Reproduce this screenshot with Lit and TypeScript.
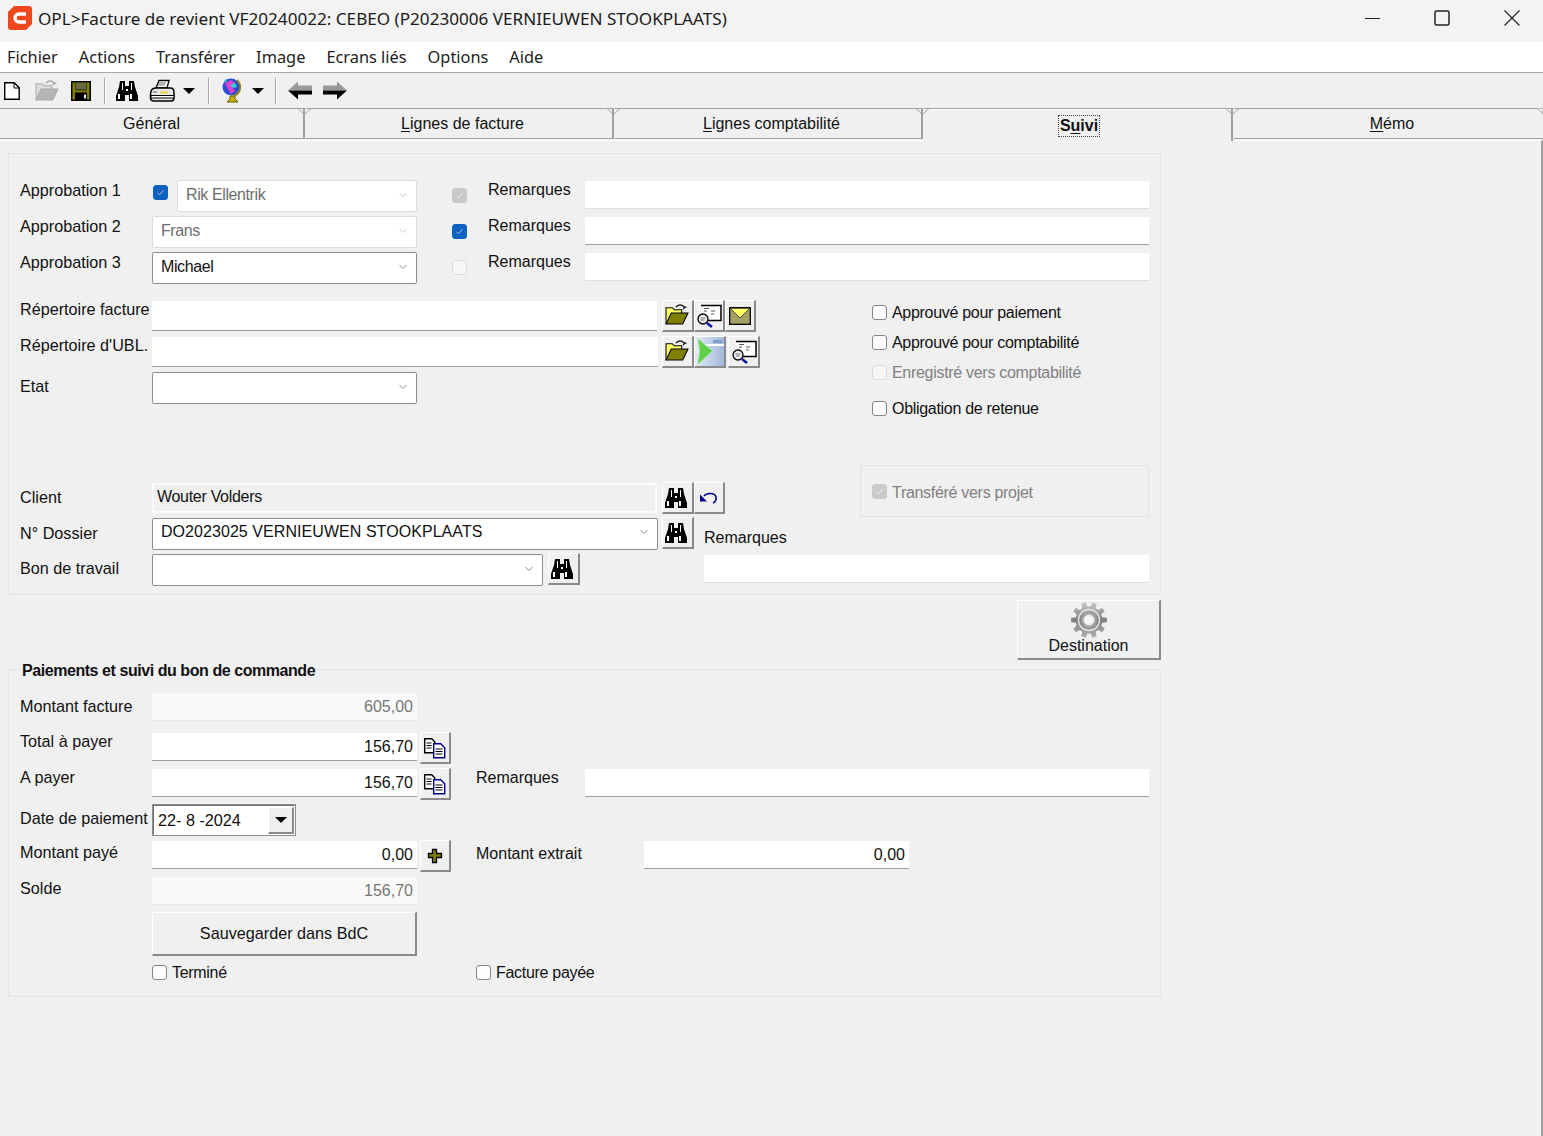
import { LitElement, html, css, svg } from "lit";
import { customElement } from "lit/decorators.js";

const binoc = html`<svg class="bn" width="24" height="22" viewBox="0 0 24 22"><path fill="#000" d="M5 1h5v5h4V1h5l1 6 3 9v5h-9v-6h-4v6H1v-5l3-9z"/><path fill="#fff" d="M7 3h1v7H7zM16 3h1v7h-1zM3 14h2v5H3zM15 14h2v5h-2zM11 9h2v2h-2z"/></svg>`;

const folderOpen = (dim = false) => html`<svg class="fo" width="26" height="23" viewBox="0 0 24 22">
  <path fill="none" stroke=${dim ? "#999" : "#000"} stroke-width="1.200" d="M11 4c2-3 6-3 8 0l-1 2m1-2l2 0"/>
  <path fill=${dim ? "#ddd" : "#ffff66"} stroke=${dim ? "#aaa" : "#000"} d="M1.500 20V4.500h6l2 2h7v3"/>
  <path fill=${dim ? "#b5b5b5" : "#808000"} stroke=${dim ? "#aaa" : "#000"} d="M1.500 20l5-10.500h16l-5 10.500z"/>
</svg>`;

const viewDoc = html`<svg width="26" height="24" viewBox="0 0 26 24">
  <path fill="#fff" stroke="#000" stroke-width="1.500" d="M5 1.500h20v15H12"/>
  <path stroke="#555" d="M8 4.500h5M8 7h3M15 7h4M15 10h3"/>
  <circle cx="7" cy="15" r="5" fill="#eee" stroke="#000" stroke-width="1.300"/>
  <path stroke="#777" d="M4.500 14h5M4.500 16h4"/>
  <path stroke="#1010b0" stroke-width="2.500" d="M11 19l5 4"/>
</svg>`;

const envelope = html`<svg width="22" height="18" viewBox="0 0 22 18">
  <rect x=".7" y=".7" width="20.600" height="16.600" fill="#a6a066" stroke="#000" stroke-width="1.300"/>
  <path fill="#ffff66" d="M2 2h18l-9 9z"/><path fill="none" stroke="#444" d="M1 1l10 10L21 1"/>
</svg>`;

const greenGo = html`<svg width="30" height="29" viewBox="0 0 30 29">
  <defs><linearGradient id="gg" x1="0" x2="1" y1="0" y2="0"><stop offset="0" stop-color="#e4ecf6"/><stop offset="1" stop-color="#9fb6d8"/></linearGradient></defs>
  <rect width="30" height="29" fill="url(#gg)"/>
  <rect x="18" y="3" width="9" height="3" fill="#7f9cc6"/><rect x="10" y="7" width="20" height="2" fill="#fff"/>
  <path fill="#5fcf4a" stroke="#8fe080" d="M3 2l14 12L3 27l2-13z"/>
</svg>`;

const undo = html`<svg width="20" height="14" viewBox="0 0 20 14">
  <path fill="none" stroke="#000090" stroke-width="1.600" d="M5 5c3-3.500 11-3.500 12 1 .6 3-1 5-3 6"/>
  <path fill="#000090" d="M1 3.500v7h7z"/>
</svg>`;

const copyDocs = html`<svg width="24" height="22" viewBox="0 0 24 22">
  <path fill="#fff" stroke="#000" stroke-width="1.400" d="M1.700 1.700h7l3 3v11h-10z"/>
  <path stroke="#000" d="M3.500 6h5M3.500 8.500h5M3.500 11h5"/>
  <path fill="#fff" stroke="#000090" stroke-width="1.400" d="M10.700 6.700h7l4 4v10h-11z"/>
  <path stroke="#000" d="M12.500 12h7M12.500 14.500h7M12.500 17h7"/>
</svg>`;

const plus = html`<svg width="16" height="16" viewBox="0 0 16 16"><path fill="#808000" stroke="#000" stroke-width="1.300" d="M5.500 1.500h4v4h5v4h-5v5h-4v-5h-4v-4h4z"/></svg>`;

// ten teeth round the middle of a 38 box
const gearPath = () => {
  const pt = (r: number, a: number) => `${(19 + r * Math.cos(a)).toFixed(2)} ${(19 + r * Math.sin(a)).toFixed(2)}`;
  const step = (Math.PI * 2) / 10;
  let d = "";
  for (let i = 0; i < 10; i++) {
    const a = i * step;
    d += `${i ? "L" : "M"}${pt(13.500, a - step * 0.32)}L${pt(18, a - step * 0.2)}L${pt(18, a + step * 0.2)}L${pt(13.500, a + step * 0.32)}`;
  }
  return d + "z";
};

const gear = html`<svg width="38" height="38" viewBox="0 0 38 38">
  <defs><linearGradient id="gr" x1="0" x2="0" y1="0" y2="1"><stop offset="0" stop-color="#c8c8c8"/><stop offset=".5" stop-color="#808080"/><stop offset="1" stop-color="#b0b0b0"/></linearGradient></defs>
  <path d=${gearPath()} fill="url(#gr)"/>
  <circle cx="19" cy="19" r="10.500" fill="none" stroke="#e6e6e6" stroke-width="1.300"/>
  <circle cx="19" cy="19" r="8" fill="#a0a0a0"/>
  <circle cx="19" cy="19" r="5.500" fill="#f4f4f4" stroke="#c4c4c4"/>
</svg>`;

const newDoc = html`<svg width="18" height="20" viewBox="0 0 18 20"><path fill="#fff" stroke="#000" stroke-width="1.400" d="M1.700 1.700h9.500l5 5v11.600H1.700z"/><path fill="none" stroke="#000" d="M11 2v5h5"/></svg>`;

const save = html`<svg width="22" height="22" viewBox="0 0 22 22">
  <rect x="1" y="1" width="20" height="20" fill="#000"/>
  <rect x="2.500" y="2.500" width="17" height="17" fill="#808000"/>
  <rect x="5" y="2.500" width="12" height="8" fill="#3c3c20"/>
  <rect x="6" y="3" width="10" height="6" fill="#6a6a40"/>
  <rect x="5" y="12.500" width="12" height="8" fill="#000"/>
  <rect x="14" y="14.500" width="2" height="4" fill="#eee"/>
</svg>`;

const printer = html`<svg width="26" height="24" viewBox="0 0 26 24">
  <path fill="#fff" stroke="#000" stroke-width="1.300" d="M7 9l3-7.500h10L18 9z"/>
  <path stroke="#666" d="M10 4h7M9 6h7"/>
  <path fill="#e6e6e6" stroke="#000" stroke-width="1.500" d="M1.500 16c0-5 2-7 5-7h15c2 0 3.500 2 3.500 5v5c0 2-1 3-3 3H5c-3 0-3.500-2-3.500-3z"/>
  <path fill="#fff" stroke="#000" d="M2 16.500h23v2.500H2z"/>
  <rect x="11" y="12.500" width="8" height="2" fill="#e8d840"/>
  <path stroke="#555" d="M4 13h4"/>
</svg>`;

const globe = html`<svg width="22" height="27" viewBox="0 0 22 27">
  <path fill="none" stroke="#a08800" stroke-width="2" d="M16 3c5 5 4 13-3 16"/>
  <circle cx="10" cy="10" r="8.500" fill="#2b4fd0"/>
  <path fill="#e040d0" d="M4 6l6-3 4 3-3 4 3 4-4 3-3-5z"/><path fill="#30d0d0" d="M9 8l5-2 2 4-4 1zM3 3l3-1-1 4z"/>
  <path fill="#c8b400" stroke="#6a5c00" d="M9 19h5v3l3 3H6l3-3z"/>
</svg>`;

const arrow = (right: boolean) => html`<svg class=${right ? "flip" : ""} width="26" height="21" viewBox="0 0 26 20">
  <path fill="#999" d="M11 1L1 10h24V5H11z"/><path fill="#000" d="M1 10l10 9v-5h14v-4z"/>
</svg>`;

const chevron = html`<svg width="10" height="6" viewBox="0 0 10 6"><path fill="none" d="M1.500 1l3.500 3.500L8.500 1"/></svg>`;
const dropTri = html`<svg width="12" height="6" viewBox="0 0 12 6"><path d="M0 0h12L6 6z"/></svg>`;
const notch = html`<svg width="13" height="12" viewBox="0 0 13 12">${svg`<path fill="none" stroke="#a0a0a0" d="M0 .5L6.500 6.500V12M13 .5L6.500 6.500"/>`}</svg>`;
const tabEnd = html`<svg class="end" width="6" height="6" viewBox="0 0 6 6">${svg`<path fill="#f0f0f0" stroke="#a0a0a0" d="M0 0L6 6V0z"/>`}</svg>`;
const mark = html`<svg width="9" height="9" viewBox="0 0 9 9"><path fill="none" stroke="currentColor" d="M1.500 4.800l2 2 4-4.500"/></svg>`;

@customElement("app-root")
export class AppRoot extends LitElement {
  static styles = css`
    :host {
      display: block;
      width: 1543px;
      height: 1136px;
      overflow: hidden;
      background: #f0f0f0;
      color: #111;
      font: 16px "Liberation Sans", Arial, sans-serif;
    }
    svg { display: block; flex: none; }
    .flip { transform: scaleX(-1); }
    .bn { margin-right: 4px; }
    .btn .fo { margin: -3px 2px 0 0; }

    .title {
      height: 42px;
      background: #f3f3f3;
      display: flex;
      align-items: center;
      padding-left: 8px;
      font: 17.120px "Noto Sans", sans-serif;
      color: #1a1a1a;
    }
    .title .text { margin-left: 6px; flex: 1; padding-bottom: 6px; }
    .title .logo { margin-bottom: 6px; }
    .winbtn { width: 70px; display: flex; justify-content: center; margin-bottom: 6px; }
    .winbtns { display: flex; margin-right: -4px; }

    .menu {
      height: 30px;
      background: #fff;
      border-bottom: 1px solid #a8a8a8;
      display: flex;
      align-items: center;
      padding-left: 7px;
      gap: 21px;
      font: 16.350px "Noto Sans", sans-serif;
      color: #222;
    }

    .toolbar {
      height: 35px;
      display: flex;
      align-items: center;
      padding-left: 3px;
    }
    .toolbar .bn { margin-right: 0; }
    .sep { width: 1px; height: 26px; background: #a8a8a8; border-right: 1px solid #fff; }
    .s8 { width: 8px; }
    .s9 { width: 9px; }
    .s10 { width: 10px; }
    .s11 { width: 11px; }
    .s12 { width: 12px; }
    .s13 { width: 13px; }

    .tabs { display: flex; height: 32px; position: relative; z-index: 1; }
    .tab {
      position: relative;
      display: flex;
      align-items: center;
      justify-content: center;
      height: 31px;
      box-sizing: border-box;
      border-top: 1px solid #a0a0a0;
      border-bottom: 1px solid #a0a0a0;
      border-right: 2px solid #a0a0a0;
      margin-right: 1px;
      background: #f0f0f0;
    }
    .tab.active {
      height: 33px;
      border-bottom: none;
      box-shadow: inset 0 1px 0 #fff;
      font-weight: bold;
      padding-left: 3px;
    }
    .tab.shifted { padding-left: 7px; }
    .tab:last-child { border-right: none; margin: 0; flex: 1; }
    .tab u { text-underline-offset: 2px; }
    .tab svg { position: absolute; top: -1px; right: -8px; z-index: 1; }
    .tab svg.end { right: 0; }
    .t1 { width: 305px; }
    .t2 { width: 308px; }
    .t3 { width: 309px; }
    .focus { border: 1px dotted #444; padding: 1px; line-height: 18px; margin-top: 2px; }

    .page {
      box-sizing: border-box;
      height: 996px;
      border-top: 1px solid #fff;
      border-right: 2px solid #a0a0a0;
      padding-top: 12px;
    }

    .panel {
      margin-left: 8px;
      width: 1153px;
      height: 442px;
      box-sizing: border-box;
      border: 1px solid #e4e4e4;
      padding: 26px 11px 0;
      display: flex;
      flex-direction: column;
    }
    .row { display: flex; height: 36px; }
    .lab { width: 132px; flex: none; line-height: 20px; white-space: nowrap; font-size: 16.200px; }
    .rem { width: 97px; margin-top: 0; font-size: 16px; }
    .up2 { margin-top: -2px; }
    .dn1 { padding-top: 1px; }
    .dn3 { padding-top: 3px; }
    .dn4 { padding-top: 4px; }
    .dn5 { padding-top: 5px; }

    .combo {
      box-sizing: border-box;
      height: 32px;
      background: #fff;
      border: 1px solid #8c8c8c;
      border-radius: 2px;
      display: flex;
      align-items: center;
      justify-content: space-between;
      padding: 0 8px 2px 8px;
      white-space: nowrap;
    }
    .combo path { stroke: #8a8a8a; }
    .combo.off { border-color: #dcdcdc; color: #6d6d6d; }
    .combo.off path { stroke: #c8c8c8; }
    .combo.tight { letter-spacing: -0.4px; }
    .combo.up1 { margin-top: -1px; }
    .combo.raise { padding-bottom: 4px; letter-spacing: 0.06px; }
    .w240 { width: 240px; }
    .w265 { width: 265px; }
    .w391 { width: 391px; }
    .w505 { width: 505px; }
    .w506 { width: 506px; }

    .edit {
      box-sizing: border-box;
      height: 30px;
      background: #fff;
      border-bottom: 1px solid #9c9c9c;
      display: flex;
      align-items: center;
      justify-content: flex-end;
      padding: 0 4px;
    }
    .edit.soft { border-bottom-color: #dedede; height: 28px; }
    .edit.firm { border-bottom-color: #9c9c9c; height: 28px; }
    .edit.ro { background: #f9f9f9; color: #777; border-bottom-color: #e8e8e8; height: 28px; }
    .edit.sunken {
      background: #f0f0f0;
      border: 2px solid #fbfbfb;
      justify-content: flex-start;
      padding: 0 0 2px 3px;
      letter-spacing: -0.3px;
    }
    .w564 { width: 564px; }
    .top1 { margin-top: 1px; }

    .cb {
      box-sizing: border-box;
      width: 15px;
      height: 15px;
      flex: none;
      border: 1px solid #858585;
      border-radius: 3px;
      background: #fdfdfd;
      display: flex;
      align-items: center;
      justify-content: center;
      color: #fff;
    }
    .cb.on { background: #0f62c0; border-color: #0f62c0; color: #9cc0ea; }
    .cb.dis { background: #c9c9c9; border-color: #c9c9c9; color: #f0f0f0; }
    .cb.none { background: #f6f6f6; border-color: #dcdcdc; }
    .cb.lead { margin: 5px 9px 0 1px; }
    .cb.tail { margin: 8px 21px 0 35px; }
    .cbrow { display: flex; align-items: center; gap: 5px; white-space: nowrap; line-height: 20px; letter-spacing: -0.3px; }
    .cbrow .cb { margin-top: -2px; }
    .muted { color: #808080; }

    .btn {
      box-sizing: border-box;
      background: #f0f0f0;
      border-top: 1px solid #fff;
      border-left: 1px solid #fff;
      border-right: 2px solid #8a8a8a;
      border-bottom: 2px solid #8a8a8a;
      display: flex;
      align-items: center;
      justify-content: center;
      flex: none;
      overflow: hidden;
    }
    .ib { width: 32px; height: 32px; }
    .ib.sm { width: 31px; }
    .ib.off2 { margin-left: 2px; }

    .mid { display: flex; height: 217px; margin-top: 13px; }
    .midl { width: 840px; flex: none; }
    .midr { flex: 1; padding-left: 12px; margin-top: -3px; }
    .midr .cbrow { height: 30px; }
    .midr .sp6 { margin-top: 6px; }
    .btns { display: flex; margin-left: 5px; margin-top: -1px; height: 32px; }
    .btns.near { margin-left: 4px; }
    .etat { height: 110px; }
    .midr .transfer {
      box-sizing: border-box;
      height: 52px;
      margin: 41px 0 0 -12px;
      border: 1px solid #e2e2e2;
      padding: 3px 0 0 11px;
    }

    .low { display: flex; height: 73px; }
    .lowl { width: 684px; flex: none; }
    .lowr { flex: 1; padding-top: 9px; }
    .lowr .lab { width: auto; font-size: 16px; line-height: 22px; }
    .lowr .edit { margin-top: 6px; }

    .dest {
      width: 144px;
      height: 60px;
      margin: 5px 0 -1px 1017px;
      flex-direction: column;
      justify-content: flex-start;
      line-height: 18px;
    }
    .dest span { margin-top: -2px; }

    fieldset {
      margin: 0 0 0 8px;
      width: 1153px;
      height: 338px;
      box-sizing: border-box;
      border: 1px solid #e4e4e4;
      padding: 14px 11px 0;
      display: flex;
      flex-direction: column;
    }
    legend {
      margin-left: 2px;
      padding: 2px 0 0;
      font-weight: bold;
      line-height: 18px;
      letter-spacing: -0.44px;
      transform: translateY(1px);
    }

    .pay .row.first { height: 40px; }
    .col { width: 265px; flex: none; }
    .pay .ib { width: 31px; margin-left: 3px; margin-top: -1px; }
    .gapl { margin-left: 25px; flex: none; line-height: 22px; }
    .gapl.g109 { width: 109px; margin-top: -2px; }
    .gapl.g168 { width: 168px; margin-top: 2px; }

    .date {
      box-sizing: border-box;
      width: 144px;
      height: 32px;
      margin-top: -1px;
      border: 2px solid;
      border-color: #707070 #fff #fff #707070;
      outline: 1px solid #8c8c8c;
      outline-offset: -1px;
      background: #fff;
      display: flex;
      align-items: center;
      padding-left: 4px;
      font-size: 16.200px;
    }
    .date span { flex: 1; }
    .date .btn { width: 26px; height: 27px; }

    .pay .row.save { height: auto; margin-top: -1px; }
    .bigbtn { width: 265px; height: 44px; font-size: 16.200px; }
    .finish { display: flex; margin: 7px 0 0 132px; }
    .finish .cbrow:first-child { width: 324px; }
  `;

  render() {
    return html`
      <div class="title">
        <svg class="logo" width="24" height="24" viewBox="0 0 24 24">
          <path fill="#f1471d" d="M6 0h15a3 3 0 0 1 3 3v15l-6 6H3a3 3 0 0 1-3-3V6z"/>
          <path fill="none" stroke="#fff" stroke-width="3.400" d="M18 8H11a4 4 0 0 0 0 8h7"/>
        </svg>
        <div class="text">OPL&gt;Facture de revient VF20240022: CEBEO (P20230006 VERNIEUWEN STOOKPLAATS)</div>
        <div class="winbtns">
          <div class="winbtn"><svg width="16" height="16" viewBox="0 0 16 16"><path stroke="#222" d="M1 8.500h15"/></svg></div>
          <div class="winbtn"><svg width="16" height="16" viewBox="0 0 16 16"><rect x="1" y="1" width="14" height="14" rx="1.500" fill="none" stroke="#222" stroke-width="1.500"/></svg></div>
          <div class="winbtn"><svg width="16" height="16" viewBox="0 0 16 16"><path stroke="#222" stroke-width="1.200" d="M.5.500l15 15M15.500.500l-15 15"/></svg></div>
        </div>
      </div>
      <div class="menu">
        <span>Fichier</span><span>Actions</span><span>Transférer</span><span>Image</span><span>Ecrans liés</span><span>Options</span><span>Aide</span>
      </div>
      <div class="toolbar">
        ${newDoc}
        <span class="s13"></span>${folderOpen(true)}
        <span class="s10"></span>${save}
        <span class="s12"></span><div class="sep"></div>
        <span class="s9"></span>${binoc}
        <span class="s10"></span>${printer}
        <span class="s8"></span>${dropTri}
        <span class="s13"></span><div class="sep"></div>
        <span class="s11"></span>${globe}
        <span class="s9"></span>${dropTri}
        <span class="s11"></span><div class="sep"></div>
        <span class="s10"></span>${arrow(false)}
        <span class="s9"></span>${arrow(true)}
      </div>
      <div class="tabs">
        <div class="tab t1">Général${notch}</div>
        <div class="tab t2 shifted"><span><u>L</u>ignes de facture</span>${notch}</div>
        <div class="tab t2 shifted"><span><u>L</u>ignes comptabilité</span>${notch}</div>
        <div class="tab t3 active"><span class="focus">S<u>u</u>ivi</span>${notch}</div>
        <div class="tab shifted"><span><u>M</u>émo</span>${tabEnd}</div>
      </div>

      <div class="page">
        <div class="panel">
          ${this.approval("Approbation 1", "Rik Ellentrik", "off", true, "dis")}
          ${this.approval("Approbation 2", "Frans", "off", false, "on")}
          ${this.approval("Approbation 3", "Michael", "", false, "none")}

          <div class="mid">
            <div class="midl">
              <div class="row">
                <div class="lab up2">Répertoire facture</div>
                <div class="edit w505"></div>
                <div class="btns"><div class="btn ib">${folderOpen()}</div><div class="btn ib sm">${viewDoc}</div><div class="btn ib sm">${envelope}</div></div>
              </div>
              <div class="row">
                <div class="lab up2">Répertoire d'UBL.</div>
                <div class="edit w506"></div>
                <div class="btns near"><div class="btn ib">${folderOpen()}</div><div class="btn ib">${greenGo}</div><div class="btn ib off2">${viewDoc}</div></div>
              </div>
              <div class="row etat">
                <div class="lab dn3">Etat</div>
                <div class="combo w265 up1"><span></span>${chevron}</div>
              </div>
              <div class="row">
                <div class="lab dn4">Client</div>
                <div class="edit sunken w505">Wouter Volders</div>
                <div class="btns"><div class="btn ib">${binoc}</div><div class="btn ib sm">${undo}</div></div>
              </div>
            </div>
            <div class="midr">
              <div class="cbrow"><div class="cb"></div>Approuvé pour paiement</div>
              <div class="cbrow"><div class="cb"></div>Approuvé pour comptabilité</div>
              <div class="cbrow muted"><div class="cb none"></div>Enregistré vers comptabilité</div>
              <div class="cbrow sp6"><div class="cb"></div>Obligation de retenue</div>
              <div class="transfer cbrow muted"><div class="cb dis">${mark}</div>Transféré vers projet</div>
            </div>
          </div>

          <div class="low">
            <div class="lowl">
              <div class="row">
                <div class="lab dn5">N° Dossier</div>
                <div class="combo raise w506">DO2023025 VERNIEUWEN STOOKPLAATS${chevron}</div>
                <div class="btns near"><div class="btn ib">${binoc}</div></div>
              </div>
              <div class="row">
                <div class="lab dn4">Bon de travail</div>
                <div class="combo w391"><span></span>${chevron}</div>
                <div class="btns"><div class="btn ib">${binoc}</div></div>
              </div>
            </div>
            <div class="lowr">
              <div class="lab">Remarques</div>
              <div class="edit soft"></div>
            </div>
          </div>
        </div>

        <div class="btn dest">${gear}<span>Destination</span></div>

        <fieldset class="pay">
          <legend>Paiements et suivi du bon de commande</legend>
          <div class="row first">
            <div class="lab dn3">Montant facture</div>
            <div class="edit ro col">605,00</div>
          </div>
          <div class="row">
            <div class="lab up2">Total à payer</div>
            <div class="edit firm col">156,70</div>
            <div class="btn ib">${copyDocs}</div>
          </div>
          <div class="row">
            <div class="lab up2">A payer</div>
            <div class="edit firm col">156,70</div>
            <div class="btn ib">${copyDocs}</div>
            <div class="gapl g109">Remarques</div>
            <div class="edit firm w564"></div>
          </div>
          <div class="row">
            <div class="lab dn3">Date de paiement</div>
            <div class="date"><span>22- 8 -2024</span><div class="btn">${dropTri}</div></div>
          </div>
          <div class="row">
            <div class="lab dn1">Montant payé</div>
            <div class="edit firm col">0,00</div>
            <div class="btn ib">${plus}</div>
            <div class="gapl g168">Montant extrait</div>
            <div class="edit firm w265">0,00</div>
          </div>
          <div class="row">
            <div class="lab dn1">Solde</div>
            <div class="edit ro col">156,70</div>
          </div>
          <div class="row save">
            <div class="lab"></div>
            <div class="btn bigbtn">Sauvegarder dans BdC</div>
          </div>
          <div class="finish">
            <div class="cbrow"><div class="cb"></div>Terminé</div>
            <div class="cbrow"><div class="cb"></div>Facture payée</div>
          </div>
        </fieldset>
      </div>
    `;
  }

  approval(label: string, value: string, state: string, leadCheck: boolean, check: string) {
    return html`
      <div class="row">
        <div class="lab">${label}</div>
        ${leadCheck ? html`<div class="cb on lead">${mark}</div>` : null}
        <div class="combo tight ${state} ${leadCheck ? "w240" : "w265"}">${value}${chevron}</div>
        <div class="cb tail ${check}">${check === "none" ? null : mark}</div>
        <div class="lab rem">Remarques</div>
        <div class="edit ${check === "on" ? "firm" : "soft"} w564 top1"></div>
      </div>
    `;
  }
}
